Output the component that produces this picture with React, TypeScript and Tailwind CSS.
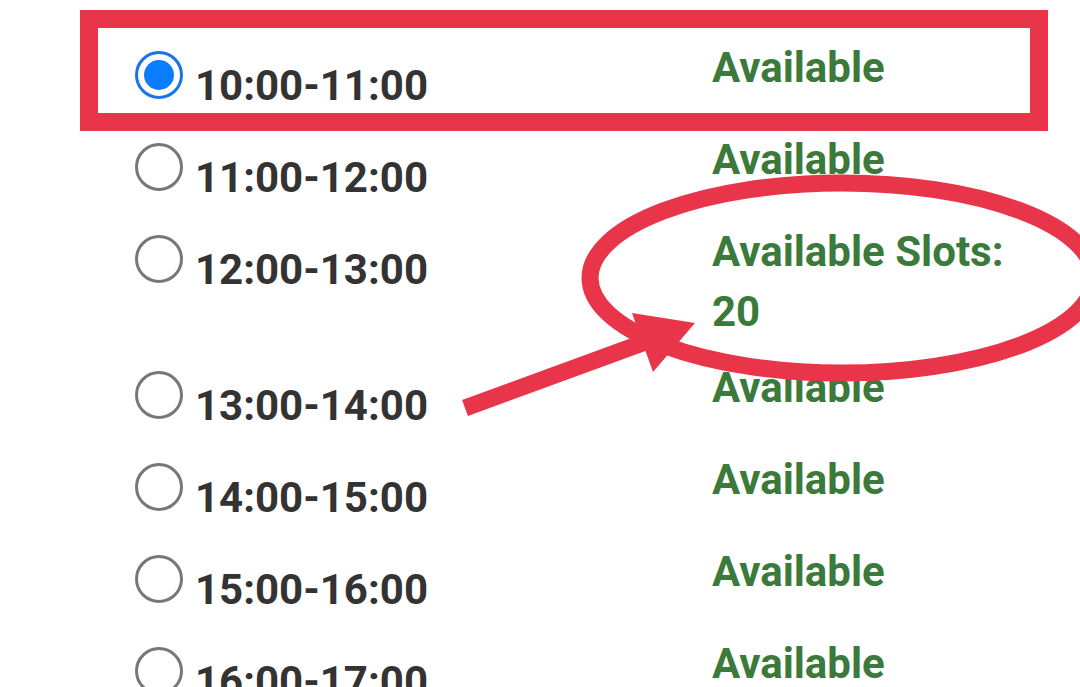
import React from 'react';

type Slot = {
  time: string;
  status: string;
  selected?: boolean;
  tall?: boolean;
};

const slots: Slot[] = [
  { time: '10:00-11:00', status: 'Available', selected: true },
  { time: '11:00-12:00', status: 'Available' },
  { time: '12:00-13:00', status: 'Available Slots: 20', tall: true },
  { time: '13:00-14:00', status: 'Available' },
  { time: '14:00-15:00', status: 'Available' },
  { time: '15:00-16:00', status: 'Available' },
  { time: '16:00-17:00', status: 'Available' },
];

const Radio = ({ checked }: { checked?: boolean }) =>
  checked ? (
    <div className="mt-[14px] flex h-12 w-12 shrink-0 items-center justify-center rounded-full border-[3px] border-[#1a73e8]">
      <div className="h-[30px] w-[30px] rounded-full bg-[#0a7cff]" />
    </div>
  ) : (
    <div className="mt-[14px] h-12 w-12 shrink-0 rounded-full border-[3px] border-[#777777]" />
  );

const Annotations = () => (
  <svg
    className="pointer-events-none absolute inset-0"
    width="1080"
    height="687"
    viewBox="0 0 1080 687"
    fill="none"
  >
    {/* highlight box round the chosen slot */}
    <rect x="89" y="19" width="950" height="103" stroke="#e8354a" strokeWidth="18" />
    {/* circle round the slot count */}
    <ellipse cx="842" cy="278" rx="252" ry="95" stroke="#e8354a" strokeWidth="17" />
    {/* arrow */}
    <line x1="465" y1="408" x2="648" y2="341" stroke="#e8354a" strokeWidth="17" />
    <polygon points="632,313 695,323 653,372" fill="#e8354a" />
  </svg>
);

const App = () => {
  return (
    <div className="relative h-[687px] w-[1080px] overflow-hidden bg-white font-['Roboto',sans-serif]">
      <div className="flex flex-col pl-[135px] pt-[37px]">
        {slots.map((slot) => (
          <div key={slot.time} className={`flex ${slot.tall ? 'h-[136px]' : 'h-[92px]'}`}>
            {/* time + radio */}
            <div className="flex w-[577px] shrink-0 items-start">
              <Radio checked={slot.selected} />
              <span className="ml-3 mt-[19px] text-[42px] font-bold leading-[60px] text-[#333333]">
                {slot.time}
              </span>
            </div>
            {/* status */}
            <div className="mt-px w-[320px] text-[42px] font-bold leading-[60px] text-[#3b7a3b]">
              {slot.status}
            </div>
          </div>
        ))}
      </div>
      <Annotations />
    </div>
  );
};

export default App;
